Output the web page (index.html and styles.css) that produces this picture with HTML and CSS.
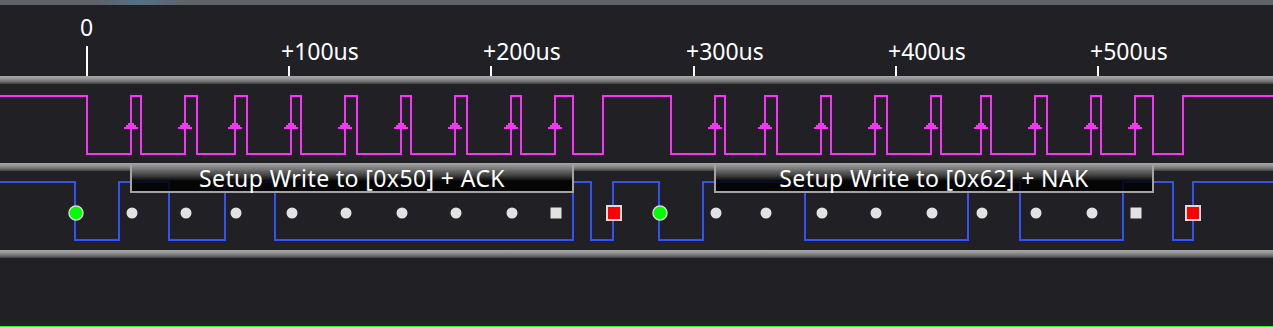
FILE: index.html
```html
<!DOCTYPE html>
<html lang="en">

<head>
    <meta charset="UTF-8">
    <meta name="viewport" content="width=device-width, initial-scale=1.0">
    <title>I2C trace</title>
    <link rel="stylesheet" href="styles.css">
</head>

<body>
    <div class="view">
        <div class="topbar"></div>

        <div class="ruler">
            <svg class="canvas" width="1273" height="71" viewBox="0 0 1273 71">
                <g stroke="#ffffff" stroke-width="2">
                    <line x1="87" y1="41" x2="87" y2="71" />
                    <line x1="289" y1="61" x2="289" y2="71" />
                    <line x1="491" y1="61" x2="491" y2="71" />
                    <line x1="694" y1="61" x2="694" y2="71" />
                    <line x1="896" y1="61" x2="896" y2="71" />
                    <line x1="1098" y1="61" x2="1098" y2="71" />
                </g>
            </svg>
            <span class="tick-label zero" style="left: 80px;">0</span>
            <span class="tick-label" style="left: 281px;">+100us</span>
            <span class="tick-label" style="left: 483px;">+200us</span>
            <span class="tick-label" style="left: 686px;">+300us</span>
            <span class="tick-label" style="left: 888px;">+400us</span>
            <span class="tick-label" style="left: 1090px;">+500us</span>
        </div>

        <div class="sep"></div>

        <!-- SCL -->
        <div class="trace">
            <svg class="canvas" width="1273" height="79" viewBox="0 0 1273 79">
                <defs>
                    <path id="rise" d="M-3 39h6v2h2v2h2v2h-14v-2h2v-2h2z" />
                </defs>
                <path class="wave scl" d="M0 12H87V70H131V12H141V70H185V12H197V70H235V12H247V70H291V12H301V70H345V12H357V70H401V12H411V70H455V12H467V70H511V12H521V70H555V12H573V70H603V12H671V70H715V12H725V70H765V12H777V70H821V12H831V70H875V12H887V70H931V12H941V70H981V12H991V70H1035V12H1047V70H1091V12H1101V70H1135V12H1153V70H1183V12H1273" />
                <g class="edge">
                    <use href="#rise" x="131" />
                    <use href="#rise" x="185" />
                    <use href="#rise" x="235" />
                    <use href="#rise" x="291" />
                    <use href="#rise" x="345" />
                    <use href="#rise" x="401" />
                    <use href="#rise" x="455" />
                    <use href="#rise" x="511" />
                    <use href="#rise" x="555" />
                    <use href="#rise" x="715" />
                    <use href="#rise" x="765" />
                    <use href="#rise" x="821" />
                    <use href="#rise" x="875" />
                    <use href="#rise" x="931" />
                    <use href="#rise" x="981" />
                    <use href="#rise" x="1035" />
                    <use href="#rise" x="1091" />
                    <use href="#rise" x="1135" />
                </g>
            </svg>
        </div>

        <div class="sep"></div>

        <!-- SDA -->
        <div class="trace">
            <svg class="canvas" width="1273" height="79" viewBox="0 0 1273 79">
                <path class="wave sda" d="M0 11H75V69H119V11H169V69H225V11H275V69H573V11H591V69H613V11H659V69H703V11H805V69H968V11H1020V69H1123V11H1173V69H1193V11H1273" />

                <circle class="start" cx="76" cy="42" r="7" />
                <g class="bit">
                    <circle cx="132" cy="42" r="5.5" />
                    <circle cx="186" cy="42" r="5.5" />
                    <circle cx="236" cy="42" r="5.5" />
                    <circle cx="292" cy="42" r="5.5" />
                    <circle cx="346" cy="42" r="5.5" />
                    <circle cx="402" cy="42" r="5.5" />
                    <circle cx="456" cy="42" r="5.5" />
                    <circle cx="512" cy="42" r="5.5" />
                    <rect x="550.5" y="36.5" width="11" height="11" />
                </g>
                <rect class="stop" x="607" y="35" width="14" height="14" />

                <circle class="start" cx="660" cy="42" r="7" />
                <g class="bit">
                    <circle cx="716" cy="42" r="5.5" />
                    <circle cx="766" cy="42" r="5.5" />
                    <circle cx="822" cy="42" r="5.5" />
                    <circle cx="876" cy="42" r="5.5" />
                    <circle cx="932" cy="42" r="5.5" />
                    <circle cx="982" cy="42" r="5.5" />
                    <circle cx="1036" cy="42" r="5.5" />
                    <circle cx="1092" cy="42" r="5.5" />
                    <rect x="1130.5" y="36.5" width="11" height="11" />
                </g>
                <rect class="stop" x="1186" y="35" width="14" height="14" />
            </svg>

            <div class="annotation ann-first">Setup Write to [0x50] + ACK</div>
            <div class="annotation ann-second">Setup Write to [0x62] + NAK</div>
        </div>

        <div class="sep"></div>
        <div class="filler"></div>
        <div class="cursor-line"></div>
    </div>
</body>

</html>
```

FILE: styles.css
```css
body {
    margin: 0;
    background-color: #202025;
    overflow: hidden;
}

.view {
    height: 100vh;
    display: flex;
    flex-direction: column;
    background-color: #202025;
    font-family: "Noto Sans", "DejaVu Sans", sans-serif;
    color: #ffffff;
}

.topbar {
    height: 5px;
    flex-shrink: 0;
    background: linear-gradient(90deg, #5f6267 0, #5f6267 95px, #557086 140px, #5f6267 190px, #5f6267 100%);
}

.ruler {
    height: 71px;
    flex-shrink: 0;
    position: relative;
}

.canvas {
    display: block;
}

.tick-label {
    position: absolute;
    top: 35px;
    font-size: 23px;
    line-height: 23px;
    white-space: nowrap;
}

.tick-label.zero {
    top: 11px;
}

.sep {
    height: 8px;
    flex-shrink: 0;
    background: linear-gradient(#a8a8a8, #939393 35%, #6e6e6e 70%, #3e3e3e);
}

.trace {
    height: 79px;
    flex-shrink: 0;
    position: relative;
}

.wave {
    fill: none;
    stroke-width: 2;
}

.scl {
    stroke: #f535f5;
}

.edge {
    fill: #f535f5;
}

.sda {
    stroke: #3552f5;
}

.start {
    fill: #00ff00;
    stroke: #d6d6d6;
    stroke-width: 1.5;
}

.bit {
    fill: #e2e2e2;
}

.stop {
    fill: #ff0000;
    stroke: #dcdcdc;
    stroke-width: 2;
}

.annotation {
    position: absolute;
    top: -6px;
    height: 26px;
    z-index: 2;
    display: flex;
    align-items: center;
    justify-content: center;
    border: 2px solid #a4a4a4;
    border-top: none;
    background: linear-gradient(rgba(150, 150, 150, 0.95), rgba(70, 70, 70, 0.88) 40%, rgba(0, 0, 0, 0.85) 62%);
    font-size: 23px;
    letter-spacing: 0.4px;
    white-space: nowrap;
}

.ann-first {
    left: 130px;
    width: 440px;
}

.ann-second {
    left: 714px;
    width: 436px;
}

.filler {
    flex: 1;
}

.cursor-line {
    height: 1px;
    flex-shrink: 0;
    background-color: #22ff22;
}
```
